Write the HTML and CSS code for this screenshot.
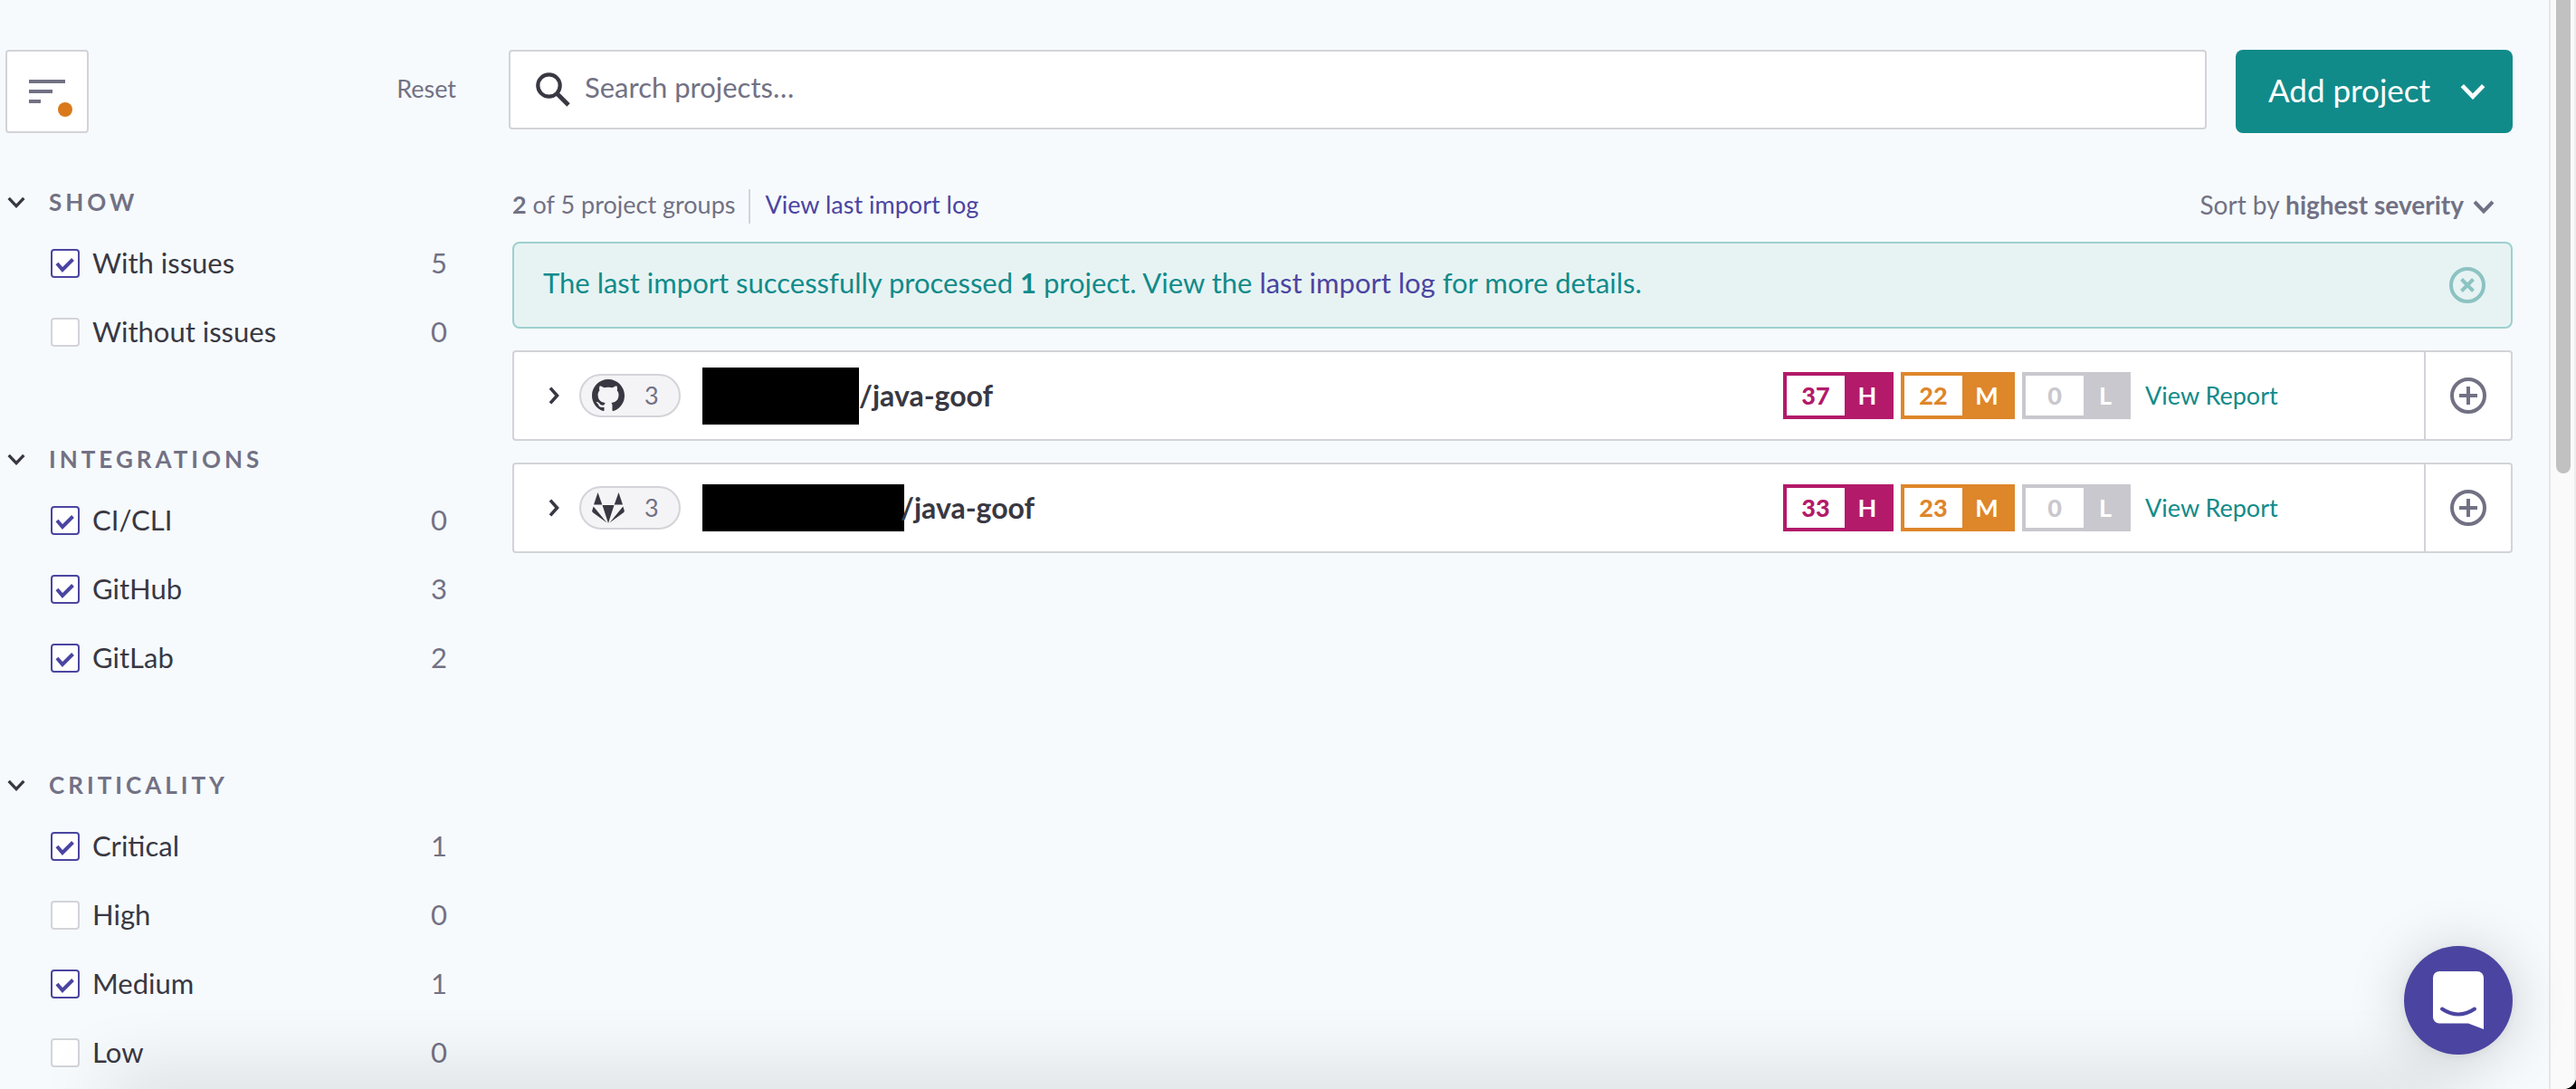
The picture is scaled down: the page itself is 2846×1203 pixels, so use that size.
FILE: index.html
```html
<!DOCTYPE html>
<html lang="en">
<head>
<meta charset="utf-8">
<meta name="viewport" content="width=device-width, initial-scale=1">
<title>Projects</title>
<link rel="stylesheet" href="styles.css">
</head>
<body>
<svg class="sprite" aria-hidden="true">
  <symbol id="chevron" viewBox="0 0 24 15"><path d="M2 2l10 10.400L22 2" fill="none" stroke="currentColor" stroke-width="4"/></symbol>
  <symbol id="chevron-right" viewBox="0 0 12 20"><path d="M2 1.600l7.500 8.400L2 18.400" fill="none" stroke="currentColor" stroke-width="3.600"/></symbol>
  <symbol id="plus-circle" viewBox="0 0 40 40"><g fill="none" stroke="currentColor" stroke-width="4"><circle cx="20" cy="20" r="18"/><path d="M20 10v20M10 20h20"/></g></symbol>
</svg>
<div class="page">
  <div class="content">
    <aside class="sidebar">
      <div class="filter-bar">
        <button class="filter-toggle" type="button" aria-label="Toggle filters">
          <svg width="56" height="56" viewBox="0 0 56 56"><path fill="#727184" d="M8 15h40v4H8zM8 26h26v4H8zM8 37h13v4H8z"/><circle cx="48" cy="48" r="8" fill="#d9791c"/></svg>
        </button>
        <button class="reset" type="button">Reset</button>
      </div>
      <section class="group">
        <h2><button type="button" class="group-head"><svg class="head-arrow"><use href="#chevron"/></svg>SHOW</button></h2>
        <label class="option"><input type="checkbox" checked><span>With issues</span><span class="count">5</span></label>
        <label class="option"><input type="checkbox"><span>Without issues</span><span class="count">0</span></label>
      </section>
      <section class="group">
        <h2><button type="button" class="group-head"><svg class="head-arrow"><use href="#chevron"/></svg>INTEGRATIONS</button></h2>
        <label class="option"><input type="checkbox" checked><span>CI/CLI</span><span class="count">0</span></label>
        <label class="option"><input type="checkbox" checked><span>GitHub</span><span class="count">3</span></label>
        <label class="option"><input type="checkbox" checked><span>GitLab</span><span class="count">2</span></label>
      </section>
      <section class="group">
        <h2><button type="button" class="group-head"><svg class="head-arrow"><use href="#chevron"/></svg>CRITICALITY</button></h2>
        <label class="option"><input type="checkbox" checked><span>Critical</span><span class="count">1</span></label>
        <label class="option"><input type="checkbox"><span>High</span><span class="count">0</span></label>
        <label class="option"><input type="checkbox" checked><span>Medium</span><span class="count">1</span></label>
        <label class="option"><input type="checkbox"><span>Low</span><span class="count">0</span></label>
      </section>
    </aside>
    <main class="main">
      <div class="toolbar">
        <label class="search">
          <svg width="38" height="38" viewBox="0 0 38 38" aria-hidden="true"><circle cx="14.500" cy="14.500" r="12.200" fill="none" stroke="#393842" stroke-width="4.200"/><path d="M23.500 23.500l12.500 12.500" stroke="#393842" stroke-width="4.800"/></svg>
          <input type="text" placeholder="Search projects…" aria-label="Search projects">
        </label>
        <button class="add" type="button"><span>Add project</span><svg class="add-arrow"><use href="#chevron"/></svg></button>
      </div>
      <div class="summary">
        <span><b>2</b> of 5 project groups</span>
        <a class="log-link" href="#log">View last import log</a>
        <button class="sort" type="button"><span>Sort by <b>highest severity</b></span><svg class="sort-arrow"><use href="#chevron"/></svg></button>
      </div>
      <div class="notice">
        <p>The last import successfully processed <b>1</b> project. View the <a href="#log">last import log</a> for more details.</p>
        <button type="button" aria-label="Dismiss"><svg width="40" height="40" viewBox="0 0 40 40" fill="none" stroke="#8cc3c2" stroke-width="4"><circle cx="20" cy="20" r="18"/><path d="M13.500 13.500l13 13M26.500 13.500l-13 13"/></svg></button>
      </div>
      <article class="project">
        <button class="expand" type="button" aria-label="Expand"><svg width="12" height="20"><use href="#chevron-right"/></svg></button>
        <span class="pill"><svg width="36" height="36" viewBox="0 0 16 16"><path fill="#393842" d="M8 0C3.580 0 0 3.580 0 8c0 3.540 2.290 6.530 5.470 7.590.4.070.55-.17.55-.38 0-.19-.010-.82-.010-1.490-2.010.37-2.530-.49-2.690-.94-.09-.23-.48-.94-.82-1.130-.28-.15-.68-.52-.010-.53.63-.010 1.080.58 1.230.82.72 1.210 1.870.87 2.330.66.070-.52.28-.87.51-1.070-1.780-.2-3.640-.89-3.640-3.950 0-.87.31-1.590.82-2.150-.08-.2-.36-1.020.08-2.120 0 0 .67-.21 2.200.82.64-.18 1.320-.27 2-.27s1.360.09 2 .27c1.530-1.040 2.200-.82 2.200-.82.44 1.100.16 1.920.08 2.120.51.56.82 1.270.82 2.150 0 3.070-1.870 3.750-3.650 3.950.29.25.54.73.54 1.480 0 1.070-.010 1.930-.010 2.200 0 .21.15.46.55.38A8.010 8.010 0 0016 8c0-4.420-3.580-8-8-8z"/></svg>3</span>
        <span class="redacted redacted-tall"></span>
        <h3>/java-goof</h3>
        <span class="badge high"><b>37</b><i>H</i></span>
        <span class="badge medium"><b>22</b><i>M</i></span>
        <span class="badge low"><b>0</b><i>L</i></span>
        <a class="report" href="#report">View Report</a>
        <button class="plus" type="button" aria-label="Add"><svg width="40" height="40"><use href="#plus-circle"/></svg></button>
      </article>
      <article class="project">
        <button class="expand" type="button" aria-label="Expand"><svg width="12" height="20"><use href="#chevron-right"/></svg></button>
        <span class="pill"><svg width="36" height="36" viewBox="0 0 36 36"><g fill="#393842"><path d="M6.500 1L11.300 14.500H2zM29.500 1L34 14.500h-9.300zM11.500 15h13L18 35z"/><path d="M1.700 16.500L16.500 34.500 .8 23Q0 22 .2 21zM34.300 16.500L19.500 34.500 35.200 23q.8-1 .6-2z"/></g></svg>3</span>
        <span class="redacted redacted-wide"></span>
        <h3>/java-goof</h3>
        <span class="badge high"><b>33</b><i>H</i></span>
        <span class="badge medium"><b>23</b><i>M</i></span>
        <span class="badge low"><b>0</b><i>L</i></span>
        <a class="report" href="#report">View Report</a>
        <button class="plus" type="button" aria-label="Add"><svg width="40" height="40"><use href="#plus-circle"/></svg></button>
      </article>
    </main>
  </div>
  <div class="scrollbar"><div class="thumb"></div></div>
</div>
<div class="bottom-shade"></div>
<button class="chat" type="button" aria-label="Open chat">
  <svg width="56" height="64" viewBox="0 0 56 64"><path fill="#fff" d="M7 0h42a7 7 0 017 7v57L39 57.500H7a7 7 0 01-7-7V7a7 7 0 017-7z"/><path d="M10 41.500q18 12 36 0" fill="none" stroke="#4b45a1" stroke-width="4" stroke-linecap="round"/></svg>
</button>
</body>
</html>
```

FILE: styles.css
```css
* { box-sizing: border-box; }

body {
  margin: 0;
  background: #000;
  color: #393842;
  font-family: Lato, "Liberation Sans", sans-serif;
  font-size: 31px;
  line-height: 40px;
}

button {
  padding: 0;
  border: 0;
  background: none;
  color: inherit;
  font: inherit;
  cursor: pointer;
}

h2, h3, p { margin: 0; }
a { text-decoration: none; }
svg { display: block; flex: none; }
.sprite { position: absolute; width: 0; height: 0; }

.page {
  display: flex;
  min-height: 100vh;
  overflow: hidden;
  border-bottom-right-radius: 14px;
  background: #f6fafd;
}

.content {
  display: flex;
  flex: 1;
  gap: 58px;
  min-width: 0;
  padding: 55px 40px 0 6px;
}

/* Filters */
.sidebar {
  flex: none;
  width: 498px;
}

.filter-bar {
  display: flex;
  align-items: center;
  justify-content: space-between;
  height: 92px;
  margin-bottom: 56px;
}

.filter-toggle {
  display: flex;
  align-items: center;
  justify-content: center;
  width: 92px;
  height: 92px;
  border: 2px solid #d3d3d9;
  border-radius: 4px;
  background: #fff;
}

.reset {
  padding-bottom: 6px;
  color: #727184;
  font-size: 27px;
}

.group { margin-bottom: 82px; }
.group:last-child { margin-bottom: 0; }

.group h2 {
  margin-bottom: 10px;
  font-size: 26px;
}

.group-head {
  display: flex;
  align-items: center;
  gap: 26px;
  color: #727184;
  font-weight: 700;
  letter-spacing: 4px;
}

.head-arrow {
  width: 20px;
  height: 13px;
  margin-left: 2px;
  color: #393842;
}

.option {
  display: flex;
  align-items: center;
  gap: 14px;
  height: 76px;
  padding: 0 10px 0 50px;
}

.option span { padding-bottom: 2px; }

.option input {
  flex: none;
  width: 32px;
  height: 32px;
  margin: 0;
  border: 2px solid #d3d3d9;
  border-radius: 4px;
  background: #fff;
  appearance: none;
}

.option input:checked {
  border-color: #4b45a1;
  background: #fff url("data:image/svg+xml,%3Csvg xmlns='http://www.w3.org/2000/svg' viewBox='0 0 28 28'%3E%3Cpath d='M5 14l6 7L22.500 9.500' fill='none' stroke='%234b45a1' stroke-width='4'/%3E%3C/svg%3E");
}

.option .count {
  margin-left: auto;
  color: #727184;
}

/* Main column */
.main {
  flex: 1;
  min-width: 0;
}

.toolbar {
  display: flex;
  align-items: flex-start;
  gap: 32px;
}

.search {
  display: flex;
  flex: 1;
  align-items: center;
  gap: 16px;
  height: 88px;
  padding: 0 28px;
  border: 2px solid #d3d3d9;
  border-radius: 4px;
  background: #fff;
}

.search input {
  flex: 1;
  min-width: 0;
  padding: 0 0 6px;
  border: 0;
  outline: 0;
  background: none;
  color: inherit;
  font: inherit;
}

.search input::placeholder {
  color: #727184;
  opacity: 1;
}

.add {
  display: flex;
  align-items: center;
  justify-content: space-between;
  width: 306px;
  height: 92px;
  padding: 0 30px 0 36px;
  border-radius: 8px;
  background: #118b8a;
  color: #fff;
  font-size: 35px;
}

.add span { padding-bottom: 4px; }
.add-arrow { width: 28px; height: 18px; }

.summary {
  display: flex;
  align-items: center;
  height: 38px;
  margin: 62px 0 20px 4px;
  color: #727184;
  font-size: 27px;
  line-height: 34px;
}

.summary span,
.log-link { padding-bottom: 4px; }

.log-link {
  margin-left: 15px;
  padding-left: 16px;
  border-left: 2px solid #d3d3d9;
  color: #4b45a1;
}

.sort {
  display: flex;
  align-items: center;
  gap: 10px;
  margin: 0 20px 0 auto;
  font-size: 28px;
}

.sort-arrow { width: 24px; height: 15px; }

.notice {
  display: flex;
  align-items: center;
  justify-content: space-between;
  height: 96px;
  margin-left: 4px;
  padding: 0 28px 0 32px;
  border: 2px solid #9dd0cf;
  border-radius: 8px;
  background: #e7f3f3;
  color: #118b8a;
}

.notice p { padding-bottom: 6px; }
.notice a { color: #4b45a1; }

.project {
  display: flex;
  align-items: center;
  height: 100px;
  margin: 24px 0 0 4px;
  border: 2px solid #d3d3d9;
  border-radius: 4px;
  background: #fff;
}

.expand { padding: 0 22px 0 38px; }

.pill {
  display: flex;
  align-items: center;
  width: 112px;
  height: 48px;
  margin-right: 24px;
  padding: 0 12px;
  gap: 22px;
  border: 2px solid #d3d3d9;
  border-radius: 24px;
  background: #f4f4f7;
  color: #727184;
  font-size: 27px;
}

.redacted { background: #000; }
.redacted-tall { width: 173px; height: 63px; }
.redacted-wide { width: 223px; height: 52px; margin-right: -4px; }

.project h3 {
  margin-right: auto;
  font-size: 32px;
}

.badge {
  display: flex;
  height: 52px;
  margin-right: 8px;
  border: 4px solid;
  font-size: 27px;
  font-weight: 700;
  line-height: 44px;
  text-align: center;
}

.badge b { width: 64px; }

.badge i {
  width: 50px;
  color: #fff;
  font-style: normal;
}

.high { color: #b31a6a; }
.high i { background: #b31a6a; }
.medium { color: #de862a; }
.medium i { width: 54px; background: #de862a; }
.low { color: #c9c8ce; }
.low i { width: 48px; background: #c9c8ce; }

.report {
  width: 316px;
  padding-left: 8px;
  color: #118b8a;
  font-size: 27px;
}

.plus {
  display: flex;
  align-items: center;
  justify-content: center;
  width: 96px;
  height: 96px;
  border-left: 2px solid #d3d3d9;
  color: #727184;
}

/* Window edge and overlays */
.scrollbar {
  flex: none;
  width: 30px;
  padding: 0 4px 0 6px;
  border-right: 2px solid #ededed;
  border-left: 2px solid #e7e7e7;
  background: #fafafa;
}

.thumb {
  height: 523px;
  border-radius: 0 0 8px 8px;
  background: #c1c1c1;
}

.bottom-shade {
  position: fixed;
  right: 150px;
  bottom: -20px;
  left: 130px;
  height: 20px;
  box-shadow: 0 0 80px 10px rgba(0, 0, 0, 0.180);
  pointer-events: none;
}

.chat {
  position: fixed;
  right: 70px;
  bottom: 38px;
  display: flex;
  align-items: center;
  justify-content: center;
  width: 120px;
  height: 120px;
  border-radius: 50%;
  background: #4b45a1;
  box-shadow: 0 4px 64px rgba(0, 0, 0, 0.180), 0 2px 12px rgba(0, 0, 0, 0.060);
}
```
